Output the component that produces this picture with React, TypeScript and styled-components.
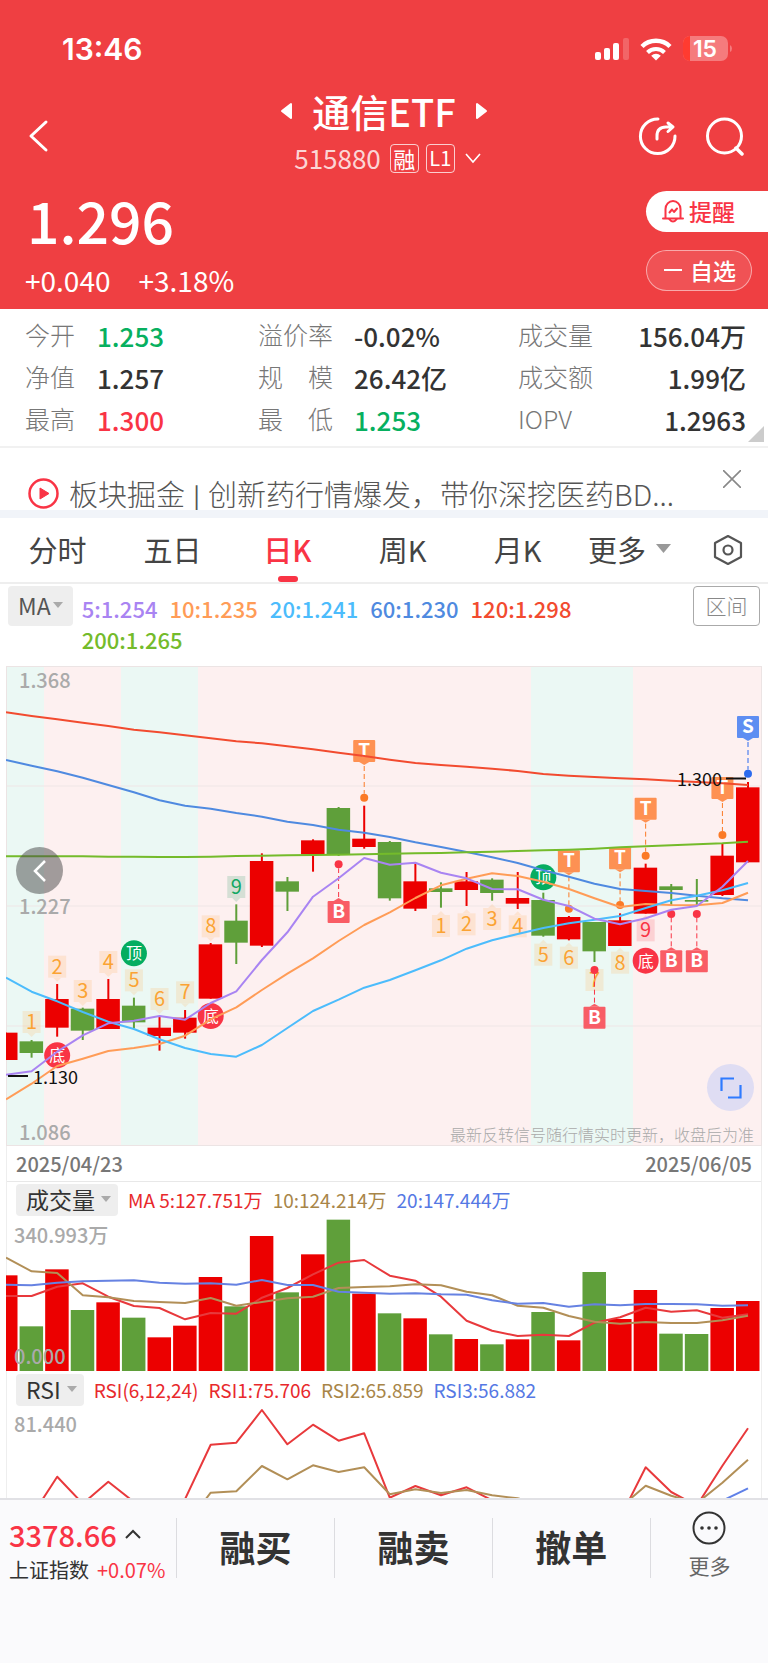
import React from 'react';
import styled, { createGlobalStyle, css } from 'styled-components';

const RED = '#f93445';
const GREEN = '#07b05f';
const INK = '#333';
const UP = '#ec0000';
const DOWN = '#5f9f3a';

const GlobalStyle = createGlobalStyle`
  *, *::before, *::after { box-sizing: border-box; }
  body {
    margin: 0;
    background: #fafafc;
    color: ${INK};
    font-family: 'Noto Sans CJK SC', 'Noto Sans', sans-serif;
  }
  button {
    margin: 0; padding: 0; border: 0; background: none;
    color: inherit; font: inherit; cursor: pointer;
  }
  dl, dd, dt, h1, p { margin: 0; font-weight: inherit; }
  svg { display: block; }
`;

const Page = styled.div`
  display: flex;
  flex-direction: column;
  min-height: 100vh;
  background: #fff;
`;

/* ---------- header ---------- */
const Header = styled.header`
  height: 309px;
  background: #ef3f42;
  color: #fff;
`;
const StatusBar = styled.div`
  display: flex;
  justify-content: space-between;
  align-items: center;
  padding: 32px 36px 0 62px;
  height: 66px;
  line-height: 34px;
  font-family: Inter, sans-serif;
  font-size: 30px;
  font-weight: 600;
`;
const StatusIcons = styled.div`
  display: flex;
  align-items: center;
  gap: 11px;
`;
const Nav = styled.nav`
  display: grid;
  grid-template-columns: 1fr auto 1fr;
  align-items: center;
  height: 104px;
  margin-top: 18px;
  padding: 0 24px;
`;
const NavSide = styled.div<{ $end?: boolean }>`
  display: flex;
  gap: 27px;
  justify-content: ${p => (p.$end ? 'flex-end' : 'flex-start')};
`;
const TitleBlock = styled.div`
  height: 100%;
`;
const TitleRow = styled.div`
  display: flex;
  align-items: center;
  justify-content: center;
  gap: 19px;
  height: 54px;
`;
const Title = styled.h1`
  font-size: 38px;
  line-height: 52px;
  font-weight: 500;
`;
const CodeRow = styled.div`
  display: flex;
  align-items: center;
  justify-content: center;
  height: 40px;
  padding-left: 10px;
  gap: 7px;
`;
const Code = styled.span`
  font-size: 26px;
  line-height: 40px;
  margin-right: 2px;
  color: rgba(255, 255, 255, 0.8);
`;
const Tag = styled.span<{ $small?: boolean }>`
  display: inline-flex;
  align-items: center;
  justify-content: center;
  width: 29px;
  height: 29px;
  border: 1px solid rgba(255, 255, 255, 0.75);
  border-radius: 4px;
  font-size: ${p => (p.$small ? 20 : 22)}px;
  line-height: 26px;
`;
const PriceRow = styled.div`
  display: flex;
  justify-content: space-between;
`;
const PriceBlock = styled.div`
  padding-left: 25px;
`;
const Price = styled.p`
  padding-left: 2px;
  font-size: 57px;
  line-height: 62px;
  font-weight: 500;
`;
const Change = styled.p`
  display: flex;
  gap: 28px;
  margin-top: 10px;
  font-size: 28px;
  line-height: 40px;
`;
const SideActions = styled.div`
  display: flex;
  flex-direction: column;
  gap: 18px;
  padding-top: 3px;
`;
const Pill = styled.button<{ $solid?: boolean }>`
  display: flex;
  align-items: center;
  gap: 5px;
  height: 41px;
  padding: 0 0 2px 16px;
  font-size: 23px;
  font-weight: 500;
  line-height: 38px;
  ${p =>
    p.$solid
      ? css`
          width: 122px;
          background: #fff;
          color: ${RED};
          border-radius: 21px 0 0 21px;
        `
      : css`
          width: 106px;
          gap: 7px;
          background: rgba(255, 255, 255, 0.1);
          border: 1px solid rgba(255, 255, 255, 0.5);
          border-radius: 21px;
        `}
`;

/* ---------- quote figures ---------- */
const Stats = styled.dl`
  position: relative;
  display: grid;
  grid-template-columns: 233fr 260fr 228fr;
  padding: 6px 22px 5px 25px;
  border-bottom: 2px solid #f1f1f1;
`;
const Stat = styled.div<{ $label: number; $end?: boolean }>`
  display: flex;
  height: 42px;
  line-height: 38px;
  justify-content: ${p => (p.$end ? 'space-between' : 'flex-start')};
  dt { flex: 0 0 ${p => p.$label}px; font-size: 25px; font-weight: 300; color: #777; white-space: nowrap; }
`;
const Figure = styled.dd<{ $color?: string }>`
  font-size: 26px;
  line-height: 42px;
  font-weight: 500;
  color: ${p => p.$color ?? INK};
`;
const Corner = styled.i`
  position: absolute;
  right: 4px;
  bottom: 4px;
  border: 8px solid transparent;
  border-right-color: #ccc;
  border-bottom-color: #ccc;
`;

/* ---------- promo ---------- */
const Promo = styled.div`
  display: flex;
  align-items: flex-start;
  height: 70px;
  padding: 22px 27px 0 28px;
  border-bottom: 8px solid #f1f4f9;
`;
const PromoLink = styled.a`
  display: flex;
  align-items: center;
  flex: 1;
  min-width: 0;
  gap: 10px;
  margin-top: 3px;
  color: #555;
  text-decoration: none;
  font-size: 29px;
  line-height: 40px;
  font-weight: 300;
  height: 40px;
  white-space: nowrap;
`;
const Divider = styled.span`
  padding: 0 2px;
  font-size: 22px;
  font-weight: 500;
  vertical-align: 2px;
`;
const Close = styled.button`
  height: 18px;
`;

/* ---------- period tabs ---------- */
const Tabs = styled.div`
  display: flex;
  height: 66px;
  border-bottom: 2px solid #eee;
  font-size: 29px;
`;
const Tab = styled.button<{ $active?: boolean }>`
  position: relative;
  flex: 1;
  padding-bottom: 3px;
  color: ${p => (p.$active ? RED : '#444')};
  font-weight: ${p => (p.$active ? 500 : 400)};
  ${p =>
    p.$active &&
    css`
      &::after {
        content: '';
        position: absolute;
        left: calc(50% - 10px);
        bottom: 0;
        width: 20px;
        height: 6px;
        border-radius: 3px;
        background: ${RED};
      }
    `}
`;
const MoreTab = styled.button`
  display: flex;
  align-items: center;
  gap: 10px;
  width: 125px;
  padding: 0 0 3px 13px;
  color: #444;
`;
const GearTab = styled.button`
  width: 68px;
  padding-left: 13px;
`;

/* ---------- indicator headings ---------- */
const MaRow = styled.div`
  display: flex;
  align-items: flex-start;
  gap: 8px;
  height: 82px;
  padding: 2px 8px 0;
`;
const MaList = styled.div`
  display: flex;
  flex-wrap: wrap;
  flex: 1;
  column-gap: 12px;
  padding: 7px 60px 0 1px;
  font-size: 22px;
  line-height: 31px;
  font-weight: 500;
`;
const Hue = styled.span<{ $color: string }>`
  color: ${p => p.$color};
  white-space: nowrap;
`;
const Picker = styled.button<{ $large?: boolean }>`
  display: flex;
  align-items: center;
  gap: ${p => (p.$large ? 2 : 6)}px;
  height: ${p => (p.$large ? 40 : 32)}px;
  padding: ${p => (p.$large ? '0 10px 2px' : '0 7px 2px 10px')};
  border-radius: 4px;
  background: #eee;
  color: ${p => (p.$large ? '#555' : INK)};
  font-size: 23px;
  font-weight: 400;
  line-height: 30px;
`;
const RangeButton = styled.button`
  width: 67px;
  height: 40px;
  padding-bottom: 2px;
  border: 1px solid #aaa;
  border-radius: 4px;
  color: #888;
  font-size: 21px;
  line-height: 36px;
  font-weight: 300;
`;

/* ---------- charts ---------- */
const Panel = styled.section`
  margin: 0 6px;
  border: solid #eee;
  border-width: 0 1px;
`;
const Plot = styled.div`
  position: relative;
  margin: 0 -1px;
  svg.plot { width: 100%; height: auto; }
`;
const RoundButton = styled.button<{ $expand?: boolean }>`
  position: absolute;
  display: flex;
  align-items: center;
  justify-content: center;
  width: 47px;
  height: 47px;
  border-radius: 50%;
  ${p =>
    p.$expand
      ? css`right: 8px; bottom: 35px; background: #dfddf3;`
      : css`left: 10px; top: 181px; background: rgba(70, 70, 70, 0.5);`}
`;
const Dates = styled.div`
  display: flex;
  justify-content: space-between;
  height: 36px;
  padding: 0 9px;
  border-bottom: 1px solid #e8e8e8;
  color: #777;
  font-size: 20px;
  font-weight: 500;
  line-height: 35px;
`;
const IndicatorRow = styled.div`
  display: flex;
  align-items: center;
  gap: 10px;
  height: 36px;
  padding-left: 9px;
  font-size: 19px;
  line-height: 30px;
`;

/* ---------- bottom bar ---------- */
const BottomBar = styled.footer`
  display: flex;
  flex: 1;
  align-items: flex-start;
  min-height: 164px;
  padding-top: 18px;
  border-top: 2px solid #e1e1e5;
  background: #fafafc;
`;
const IndexLink = styled.button`
  width: 176px;
  height: 60px;
  padding-left: 9px;
  text-align: left;
`;
const IndexValue = styled.span`
  display: flex;
  align-items: center;
  gap: 8px;
  color: ${RED};
  font-size: 29px;
  font-weight: 500;
  line-height: 32px;
`;
const IndexName = styled.span`
  display: flex;
  gap: 8px;
  font-size: 20px;
  line-height: 40px;
  white-space: nowrap;
`;
const Trade = styled.button`
  flex: 158;
  height: 60px;
  padding-bottom: 4px;
  border-left: 1px solid #dcdce0;
  font-size: 36px;
  font-weight: 700;
`;
const MoreButton = styled.button`
  display: flex;
  flex: 118;
  flex-direction: column;
  align-items: center;
  height: 60px;
  gap: 6px;
  border-left: 1px solid #dcdce0;
  color: #666;
  font-size: 21px;
  line-height: 28px;
`;
const MoreIcon = styled.svg`
  flex: none;
  margin-top: -7px;
`;

/* ---------- drawings ---------- */
const Caret = ({ size = 10, color = '#aaa' }: { size?: number; color?: string }) => (
  <svg width={size} height={size * 0.6} viewBox="0 0 10 6">
    <path d="M0 0h10L5 6z" fill={color} />
  </svg>
);

/* One step per trading day; levels are kept at three steps per plot unit. */
const STEP = 742 / 29;
const cx = (i: number) => i * STEP;
const polyline = (levels: number[], base: number, first = 0) =>
  levels.map((v, k) => `${cx(first + k).toFixed(1)},${((v - base) / 3).toFixed(1)}`).join(' ');

// [rising, body top, body bottom, high, low]
const CANDLES: [number, number, number, number, number][] = [
  [1, 1118, 1200, 1118, 1200], [0, 1144, 1179, 1140, 1193], [1, 1017, 1103, 972, 1130],
  [0, 1046, 1112, 1043, 1140], [1, 1017, 1107, 957, 1107], [0, 1037, 1087, 1013, 1105],
  [1, 1103, 1128, 1070, 1172], [1, 1073, 1118, 1050, 1136], [1, 853, 1016, 849, 1016],
  [0, 782, 848, 733, 912], [1, 603, 857, 580, 861], [0, 664, 695, 651, 753],
  [1, 541, 583, 538, 635], [0, 444, 583, 441, 588], [1, 536, 561, 437, 566],
  [0, 546, 715, 543, 722], [1, 664, 746, 610, 753], [0, 685, 696, 667, 743],
  [1, 664, 690, 636, 738], [0, 659, 699, 655, 722], [1, 714, 731, 636, 747],
  [0, 720, 827, 698, 830], [1, 771, 838, 768, 841], [0, 786, 874, 786, 906],
  [1, 781, 858, 760, 858], [1, 623, 761, 611, 761], [0, 679, 690, 672, 737],
  [0, 720, 725, 657, 737], [1, 587, 705, 552, 708], [1, 382, 607, 366, 607],
];
const K_BASE = 18;
const ky = (v: number) => (v - K_BASE) / 3;

const K_LINES: [string, number[]][] = [
  ['#f24b2f', [157, 168, 178, 188, 198, 209, 217, 226, 235, 244, 250, 259, 268, 278, 288, 299, 309, 315, 320, 326, 333, 342, 347, 351, 355, 358, 362, 366, 370, 375]],
  ['#4f8ae0', [300, 317, 334, 353, 375, 397, 421, 437, 446, 459, 470, 485, 495, 509, 518, 531, 547, 561, 576, 592, 609, 631, 650, 671, 687, 693, 699, 707, 715, 721]],
  ['#74bb2b', [589, 589, 589, 589, 590, 590, 591, 591, 590, 588, 587, 586, 585, 584, 583, 581, 580, 579, 577, 575, 573, 571, 569, 566, 562, 559, 556, 553, 550, 545]],
  ['#ff9c57', [1318, 1271, 1218, 1196, 1173, 1164, 1152, 1127, 1078, 1042, 990, 941, 895, 843, 795, 757, 714, 676, 656, 640, 648, 665, 687, 715, 741, 732, 735, 736, 729, 698]],
  ['#4cbcfc', [953, 995, 1024, 1056, 1085, 1107, 1138, 1164, 1182, 1190, 1155, 1104, 1053, 1019, 983, 960, 931, 901, 866, 841, 822, 804, 790, 779, 768, 744, 721, 707, 691, 669]],
  ['#a984f2', [1244, 1234, 1175, 1126, 1090, 1082, 1068, 1079, 1029, 994, 900, 817, 710, 655, 594, 614, 608, 638, 655, 687, 688, 719, 738, 776, 793, 775, 749, 738, 680, 603]],
];

// [day, digit, top, side of the candle]
const COUNTS: [number, number, number, 'above' | 'below'][] = [
  [1, 1, 1053, 'above'], [2, 2, 887, 'above'], [3, 3, 960, 'above'], [4, 4, 873, 'above'],
  [5, 5, 928, 'above'], [6, 6, 984, 'above'], [7, 7, 964, 'above'], [8, 8, 766, 'above'],
  [9, 9, 648, 'above'], [17, 1, 765, 'below'], [18, 2, 760, 'below'], [19, 3, 744, 'below'],
  [20, 4, 766, 'below'], [21, 5, 851, 'below'], [22, 6, 860, 'below'], [23, 7, 927, 'below'],
  [24, 8, 875, 'below'], [25, 9, 778, 'below'],
];
const TURNS: [number, number, string][] = [
  [5, 880, '顶'], [21, 652, '顶'], [2, 1186, '底'], [8, 1068, '底'], [25, 902, '底'],
];
// [day, letter, flag top, dot level]
const SIGNALS: [number, string, number, number][] = [
  [14, 'T', 240, 413], [22, 'T', 571, 746], [24, 'T', 562, 735], [25, 'T', 413, 587],
  [28, 'T', 351, 525], [29, 'S', 168, 341], [13, 'B', 723, 613], [23, 'B', 1040, 930],
  [26, 'B', 871, 762], [27, 'B', 871, 762],
];
const SIGNAL_COLORS: Record<string, [string, string]> = {
  T: ['#ff8a47', '#fb7a26'],
  S: ['#5387f3', '#2c6bee'],
  B: ['#f9525b', '#f93445'],
};

const CountBadge = ({ day, digit, top, side }: { day: number; digit: number; top: number; side: string }) => {
  const x = cx(day);
  const y = ky(top);
  const last = digit === 9;
  const color = last ? (side === 'above' ? '#12a863' : RED) : '#fba333';
  const fill = last ? (side === 'above' ? '#0e8a50' : RED) : '#ffb45e';
  const arrow = side === 'above' ? `M${x - 4} ${y + 22}h8l-4 4z` : `M${x - 4} ${y}h8l-4-4z`;
  return (
    <g>
      <g fill={fill} opacity={last ? 0.16 : 0.2}>
        <rect x={x - 9} y={y} width="18" height="22" />
        <path d={arrow} />
      </g>
      <text x={x} y={y + 18} fontSize="20" textAnchor="middle" fill={color}>{digit}</text>
    </g>
  );
};

const Signal = ({ day, letter, top, dot }: { day: number; letter: string; top: number; dot: number }) => {
  const x = cx(day);
  const y = ky(top);
  const d = ky(dot);
  const [flag, point] = SIGNAL_COLORS[letter];
  const above = dot > top;
  return (
    <g>
      <line x1={x} x2={x} y1={above ? y + 26 : y - 4} y2={above ? d - 4 : d + 4} stroke={point} strokeDasharray="5 3" />
      <circle cx={x} cy={d} r="4" fill={point} />
      <g fill={flag} opacity="0.93">
        <rect x={x - 11} y={y} width="22" height="22" rx="1" />
        <path d={above ? `M${x - 5} ${y + 22}h10l-5 3z` : `M${x - 5} ${y}h10l-5-3z`} />
      </g>
      <text x={x} y={y + 17} fontSize="19" fontWeight="700" textAnchor="middle" fill="#fff">{letter}</text>
    </g>
  );
};

const BANDS: [number, number, string][] = [
  [0, 38, '#ebf8f4'], [38, 77, '#fdf0f0'], [115, 77, '#ebf8f4'],
  [192, 333, '#fdf0f0'], [525, 102, '#ebf8f4'], [627, 129, '#fdf0f0'],
];

const KChart = () => (
  <svg className="plot" viewBox="0 0 756 480" role="img" aria-label="日K">
    {BANDS.map(([x, w, fill]) => <rect key={x} x={x} y="0" width={w} height="480" fill={fill} />)}
    {[120, 240, 360].map(y => <path key={y} d={`M0 ${y}H756`} stroke="#efe6e6" />)}
    <rect x="0.5" y="0.5" width="755" height="479" fill="none" stroke="#ece4e4" />
    <g fontSize="20" fill="#aaa">
      <text x="13" y="22" fontWeight="500">1.368</text>
      <text x="13" y="248" fontWeight="500">1.227</text>
      <text x="13" y="474" fontWeight="500">1.086</text>
      <text x="748" y="475" fontSize="16" fontWeight="300" textAnchor="end">最新反转信号随行情实时更新，收盘后为准</text>
    </g>
    {TURNS.map(([day, level, text]) => (
      <g key={day}>
        <circle cx={cx(day)} cy={ky(level)} r="13" fill={text === '顶' ? '#05ad60' : RED} />
        <text x={cx(day)} y={ky(level) + 6} fontSize="16" textAnchor="middle" fill="#fff">{text}</text>
      </g>
    ))}
    {COUNTS.map(([day, digit, top, side]) => <CountBadge key={day} day={day} digit={digit} top={top} side={side} />)}
    {SIGNALS.map(([day, letter, top, dot]) => <Signal key={`${day}${letter}`} day={day} letter={letter} top={top} dot={dot} />)}
    {CANDLES.map(([rising, top, bottom, high, low], i) => {
      const color = rising ? UP : DOWN;
      const left = Math.max(0, cx(i) - 12);
      return (
        <g key={i} fill={color}>
          <rect x={cx(i) - 1} y={ky(high)} width="2" height={ky(low) - ky(high)} />
          <rect x={left} y={ky(top)} width={cx(i) + 11.5 - left} height={ky(bottom) - ky(top)} />
        </g>
      );
    })}
    {K_LINES.map(([color, levels]) => (
      <polyline key={color} points={polyline(levels, K_BASE)} fill="none" stroke={color} strokeWidth="2" strokeLinejoin="round" />
    ))}
    <g fontSize="18" fill="#111">
      <text x="27" y="418">1.130</text>
      <text x="716" y="120" textAnchor="end">1.300</text>
      <path d="M2 410h20M720 112.500h20" stroke="#111" strokeWidth="2" />
    </g>
  </svg>
);

const VOLUMES = [406, 559, 388, 510, 487, 533, 592, 557, 411, 499, 288, 457, 343, 239, 461, 520, 535, 583, 597, 613, 598, 516, 601, 396, 537, 450, 581, 582, 504, 483];
const V_BASE = 234;
const V_LINES: [string, number[]][] = [
  ['#e8393c', [468, 468, 440, 430, 470, 498, 504, 538, 519, 521, 473, 444, 403, 368, 360, 407, 422, 470, 542, 572, 588, 584, 588, 548, 532, 503, 515, 511, 533, 523]],
  ['#b28f57', [353, 394, 399, 466, 472, 483, 486, 489, 474, 497, 486, 475, 470, 444, 441, 439, 433, 436, 455, 466, 497, 503, 528, 545, 551, 546, 549, 549, 541, 527]],
  ['#6682e2', [434, 436, 428, 424, 422, 421, 428, 431, 430, 434, 420, 435, 435, 455, 458, 461, 460, 463, 464, 481, 491, 489, 500, 493, 496, 492, 492, 493, 497, 496]],
];

const VolumeChart = () => (
  <svg className="plot" viewBox="0 0 756 154" role="img" aria-label="成交量">
    {VOLUMES.map((v, i) => {
      const left = Math.max(0, cx(i) - 12);
      const top = (v - V_BASE) / 3;
      return <rect key={i} x={left} y={top} width={cx(i) + 11.5 - left} height={153 - top} fill={CANDLES[i][0] ? UP : DOWN} />;
    })}
    {V_LINES.map(([color, levels]) => (
      <polyline key={color} points={polyline(levels, V_BASE)} fill="none" stroke={color} strokeWidth="2" strokeLinejoin="round" />
    ))}
    <g fill="#aaa" fontWeight="500">
      <text x="8" y="25" fontSize="20">340.993万</text>
      <text x="8" y="146" fontSize="20">0.000</text>
    </g>
  </svg>
);

const R_BASE = 804;
const R_LINES: [string, number, number[]][] = [
  ['#e8393c', 0, [1230, 1129, 1010, 1091, 1025, 1086, 1120, 1077, 914, 908, 810, 913, 854, 902, 880, 1073, 1038, 1066, 1042, 1081, 1120, 1140, 1150, 1150, 1134, 982, 1056, 1097, 977, 865]],
  ['#b28f57', 7, [1158, 1058, 1054, 978, 1018, 976, 996, 982, 1063, 1048, 1059, 1050, 1066, 1075, 1095, 1110, 1110, 1103, 1037, 1067, 1090, 1028, 959]],
  ['#5f80e8', 28, [1082, 1045]],
];

const RsiChart = () => (
  <svg className="plot" viewBox="0 0 756 90" role="img" aria-label="RSI">
    <text x="8" y="24" fontSize="20" fontWeight="500" fill="#aaa">81.440</text>
    {R_LINES.map(([color, first, levels]) => (
      <polyline key={color} points={polyline(levels, R_BASE, first)} fill="none" stroke={color} strokeWidth="2" strokeLinejoin="round" />
    ))}
  </svg>
);

const STATS: { label: string; value: string; color?: string }[] = [
  { label: '今开', value: '1.253', color: GREEN },
  { label: '溢价率', value: '-0.02%' },
  { label: '成交量', value: '156.04万' },
  { label: '净值', value: '1.257' },
  { label: '规　模', value: '26.42亿' },
  { label: '成交额', value: '1.99亿' },
  { label: '最高', value: '1.300', color: RED },
  { label: '最　低', value: '1.253', color: GREEN },
  { label: 'IOPV', value: '1.2963' },
];
const LABEL_WIDTHS = [72, 96, 96];

const MA: [string, string][] = [
  ['5:1.254', '#a984f2'], ['10:1.235', '#ff9c57'], ['20:1.241', '#4cbcfc'],
  ['60:1.230', '#4f8ae0'], ['120:1.298', '#f24b2f'], ['200:1.265', '#74bb2b'],
];

export default function App() {
  return (
    <Page>
      <GlobalStyle />
      <Header>
        <StatusBar>
          <span>13:46</span>
          <StatusIcons>
            <svg width="34" height="24" viewBox="0 0 34 24" fill="#fff">
              <rect x="0" y="15" width="6" height="8" rx="2" />
              <rect x="9" y="11" width="6" height="12" rx="2" />
              <rect x="18" y="6" width="6" height="17" rx="2" />
              <rect x="28" y="1" width="6" height="22" rx="2" opacity="0.2" />
            </svg>
            <svg width="32" height="24" viewBox="0 0 32 24" fill="none" stroke="#fff" strokeWidth="4.500">
              <path d="M2 9.500a20 20 0 0 1 28 0" />
              <path d="M7.500 15.500a12 12 0 0 1 17 0" strokeWidth="4" />
              <path d="M16 23.500l-4.800-4.800a7 7 0 0 1 9.600 0z" fill="#fff" stroke="none" />
            </svg>
            <svg width="49" height="26" viewBox="0 0 49 26">
              <rect x="0" y="0" width="45" height="25" rx="7" fill="#f57b7d" />
              <path d="M7 0v25a7 7 0 0 1-7-7V7a7 7 0 0 1 7-7z" fill="#ff3b30" />
              <path d="M47 9q2 1 2 3.500T47 16z" fill="#f57b7d" />
              <text x="22" y="21" fontSize="23" fontWeight="600" textAnchor="middle" fill="#fff">15</text>
            </svg>
          </StatusIcons>
        </StatusBar>
        <Nav>
          <NavSide>
            <button aria-label="返回">
              <svg width="28" height="34" viewBox="0 0 28 34" fill="none" stroke="#fff" strokeWidth="3" strokeLinecap="round" strokeLinejoin="round">
                <path d="M22 3L7 17l15 14" />
              </svg>
            </button>
          </NavSide>
          <TitleBlock>
            <TitleRow>
              <button aria-label="上一只">
                <svg width="13" height="18" viewBox="0 0 13 18"><path d="M11 2v14L2 9z" fill="#fff" stroke="#fff" strokeWidth="2" strokeLinejoin="round" /></svg>
              </button>
              <Title>通信ETF</Title>
              <button aria-label="下一只">
                <svg width="13" height="18" viewBox="0 0 13 18"><path d="M2 2v14l9-7z" fill="#fff" stroke="#fff" strokeWidth="2" strokeLinejoin="round" /></svg>
              </button>
            </TitleRow>
            <CodeRow>
              <Code>515880</Code>
              <Tag>融</Tag>
              <Tag $small>L1</Tag>
              <svg width="22" height="12" viewBox="0 0 22 12" fill="none" stroke="#fff" strokeWidth="1.600"><path d="M4 2l7 8 7-8" /></svg>
            </CodeRow>
          </TitleBlock>
          <NavSide $end>
            <button aria-label="分享">
              <svg width="40" height="40" viewBox="0 0 40 40" fill="none" stroke="#fff" strokeWidth="3" strokeLinecap="round" strokeLinejoin="round">
                <path d="M21 3a17.300 17.300 0 1 0 17 17" />
                <path d="M20 23v-3c0-6 3-9 9-9h6M31 7l5 4-5 4.500" />
              </svg>
            </button>
            <button aria-label="搜索">
              <svg width="40" height="40" viewBox="0 0 40 40" fill="none" stroke="#fff" strokeWidth="3" strokeLinecap="round">
                <circle cx="20.500" cy="20" r="17" />
                <path d="M32 32l6 6" strokeWidth="3.500" />
              </svg>
            </button>
          </NavSide>
        </Nav>
        <PriceRow>
          <PriceBlock>
            <Price>1.296</Price>
            <Change><span>+0.040</span><span>+3.18%</span></Change>
          </PriceBlock>
          <SideActions>
            <Pill $solid>
              <svg width="22" height="24" viewBox="0 0 22 24" fill="none" stroke={RED} strokeWidth="2" strokeLinecap="round" strokeLinejoin="round">
                <path d="M3.500 19V10a7.500 8 0 0 1 15 0v9M1 19.500h20M7 20q4 5 8 0M7.500 13.500l2.500-3 2 2.500 3-3.500" />
              </svg>
              提醒
            </Pill>
            <Pill>
              <svg width="20" height="4" viewBox="0 0 20 4"><path d="M1 2h18" stroke="#fff" strokeWidth="2" /></svg>
              自选
            </Pill>
          </SideActions>
        </PriceRow>
      </Header>

      <Stats>
        {STATS.map((s, i) => (
          <Stat key={s.label} $label={LABEL_WIDTHS[i % 3]} $end={i % 3 === 2}>
            <dt>{s.label}</dt>
            <Figure $color={s.color}>{s.value}</Figure>
          </Stat>
        ))}
        <Corner />
      </Stats>

      <Promo>
        <PromoLink href="#live">
          <svg width="31" height="31" viewBox="0 0 31 31">
            <circle cx="15.500" cy="15.500" r="14" fill="none" stroke={RED} strokeWidth="2.500" />
            <path d="M12 10l9 5.500-9 5.500z" fill={RED} stroke={RED} strokeLinejoin="round" />
          </svg>
          <span>板块掘金 <Divider>|</Divider> 创新药行情爆发，带你深挖医药BD...</span>
        </PromoLink>
        <Close aria-label="关闭">
          <svg width="18" height="18" viewBox="0 0 18 18" stroke="#888" strokeWidth="1.600"><path d="M0 0l18 18M18 0L0 18" /></svg>
        </Close>
      </Promo>

      <Tabs role="tablist">
        {['分时', '五日', '日K', '周K', '月K'].map(t => (
          <Tab key={t} role="tab" aria-selected={t === '日K'} $active={t === '日K'}>{t}</Tab>
        ))}
        <MoreTab>更多<Caret size={15} color="#999" /></MoreTab>
        <GearTab aria-label="设置">
          <svg width="30" height="32" viewBox="0 0 30 32" fill="none" stroke="#555" strokeWidth="2.200" strokeLinejoin="round">
            <path d="M15 2l13 7v14l-13 7-13-7V9z" />
            <circle cx="15" cy="16" r="4.500" />
          </svg>
        </GearTab>
      </Tabs>

      <MaRow>
        <Picker $large>MA<Caret size={10} /></Picker>
        <MaList>
          {MA.map(([text, color]) => <Hue key={text} $color={color}>{text}</Hue>)}
        </MaList>
        <RangeButton>区间</RangeButton>
      </MaRow>

      <Panel>
        <Plot>
          <KChart />
          <RoundButton aria-label="向前">
            <svg width="16" height="22" viewBox="0 0 16 22" fill="none" stroke="#fff" strokeWidth="2.500"><path d="M13 1L3 11l10 10" /></svg>
          </RoundButton>
          <RoundButton $expand aria-label="全屏">
            <svg width="22" height="22" viewBox="0 0 22 22" fill="none" stroke="#2f7bff" strokeWidth="2.200"><path d="M1.500 14V1.500H14M20.500 8v12.500H8" /></svg>
          </RoundButton>
        </Plot>
        <Dates><time>2025/04/23</time><time>2025/06/05</time></Dates>
        <IndicatorRow>
          <Picker>成交量<Caret /></Picker>
          <Hue $color="#e8292c">MA 5:127.751万</Hue>
          <Hue $color="#a88548">10:124.214万</Hue>
          <Hue $color="#5578e4">20:147.444万</Hue>
        </IndicatorRow>
        <Plot><VolumeChart /></Plot>
        <IndicatorRow>
          <Picker>RSI<Caret /></Picker>
          <Hue $color="#e8292c">RSI(6,12,24)</Hue>
          <Hue $color="#e8292c">RSI1:75.706</Hue>
          <Hue $color="#a88548">RSI2:65.859</Hue>
          <Hue $color="#5578e4">RSI3:56.882</Hue>
        </IndicatorRow>
        <Plot><RsiChart /></Plot>
      </Panel>

      <BottomBar>
        <IndexLink>
          <IndexValue>
            3378.66
            <svg width="16" height="10" viewBox="0 0 16 10" fill="none" stroke={INK} strokeWidth="2"><path d="M1 9l7-7 7 7" /></svg>
          </IndexValue>
          <IndexName>上证指数<Hue $color={RED}>+0.07%</Hue></IndexName>
        </IndexLink>
        <Trade>融买</Trade>
        <Trade>融卖</Trade>
        <Trade>撤单</Trade>
        <MoreButton>
          <MoreIcon width="34" height="34" viewBox="0 0 34 34">
            <circle cx="17" cy="17" r="15.500" fill="none" stroke={INK} strokeWidth="2" />
            <g fill={INK}><circle cx="10" cy="17" r="1.800" /><circle cx="17" cy="17" r="1.800" /><circle cx="24" cy="17" r="1.800" /></g>
          </MoreIcon>
          更多
        </MoreButton>
      </BottomBar>
    </Page>
  );
}
